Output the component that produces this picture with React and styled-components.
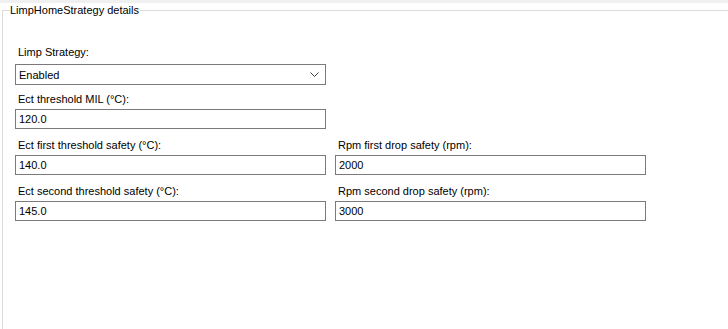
import React from "react";
import styled, { createGlobalStyle } from "styled-components";

const GlobalStyle = createGlobalStyle`
	html, body {
		margin: 0;
		padding: 0;
		background: #ffffff;
	}
	body {
		font-family: "Liberation Sans", Arial, sans-serif;
		font-size: 11px;
		color: #000000;
	}
`;

const fields = [
	[{ label: "Ect first threshold safety (°C):", value: "140.0" }, { label: "Rpm first drop safety (rpm):", value: "2000" }],
	[{ label: "Ect second threshold safety (°C):", value: "145.0" }, { label: "Rpm second drop safety (rpm):", value: "3000" }],
];

const Chevron = () => (
	<svg width="9" height="5" viewBox="0 0 9 5">
		<path d="M0.5 0.5 L4.5 4.5 L8.5 0.5" fill="none" stroke="#3c3c3c" strokeWidth="1" />
	</svg>
);

const Field = ({ label, value }) => (
	<FieldBox>
		<Label>{label}</Label>
		<TextInput>{value}</TextInput>
	</FieldBox>
);

const App = () => {
	return (
		<Page>
			<GlobalStyle />
			<TopBand />
			<Group>
				<Legend>LimpHomeStrategy details</Legend>
				<Form>
					<Row>
						<FieldBox>
							<Label>Limp Strategy:</Label>
							<Combo>
								<span>Enabled</span>
								<Chevron />
							</Combo>
						</FieldBox>
					</Row>
					<Row>
						<Field label="Ect threshold MIL (°C):" value="120.0" />
					</Row>
					{fields.map((row, i) => (
						<Row key={i}>
							{row.map((f) => (
								<Field key={f.label} label={f.label} value={f.value} />
							))}
						</Row>
					))}
				</Form>
			</Group>
		</Page>
	);
};

const Page = styled.div`
	width: 728px;
	height: 329px;
	overflow: hidden;
	background: #ffffff;
`;
const TopBand = styled.div`
	height: 3px;
	background: #f0f0f0;
`;
const Group = styled.fieldset`
	margin: 0 0 0 2px;
	padding: 0;
	border: 1px solid #dcdcdc;
	border-right: none;
	border-bottom: none;
	height: 340px;
	min-width: 0;
`;
const Legend = styled.legend`
	padding: 0 1px 0 0;
	margin-left: 7px;
	line-height: 14px;
	font-size: 11px;
`;
const Form = styled.div`
	display: flex;
	flex-direction: column;
	gap: 10px;
	padding: 29px 0 0 12px;
`;
const Row = styled.div`
	display: grid;
	grid-template-columns: 311px 311px;
	column-gap: 9px;
`;
const FieldBox = styled.div`
	display: flex;
	flex-direction: column;
`;
const Label = styled.div`
	padding-left: 3px;
	line-height: 13px;
	height: 13px;
	margin-bottom: 3px;
	color: #000000;
`;
const TextInput = styled.div`
	box-sizing: border-box;
	height: 20px;
	border: 1px solid #7a7a7a;
	padding: 0 3px;
	line-height: 18px;
	background: #ffffff;
`;
const Combo = styled.div`
	box-sizing: border-box;
	height: 21px;
	margin: 2px 0 -2px;
	border: 1px solid #7a7a7a;
	padding: 0 6px 0 3px;
	display: flex;
	align-items: center;
	justify-content: space-between;
	background: #ffffff;
`;

export default App;
